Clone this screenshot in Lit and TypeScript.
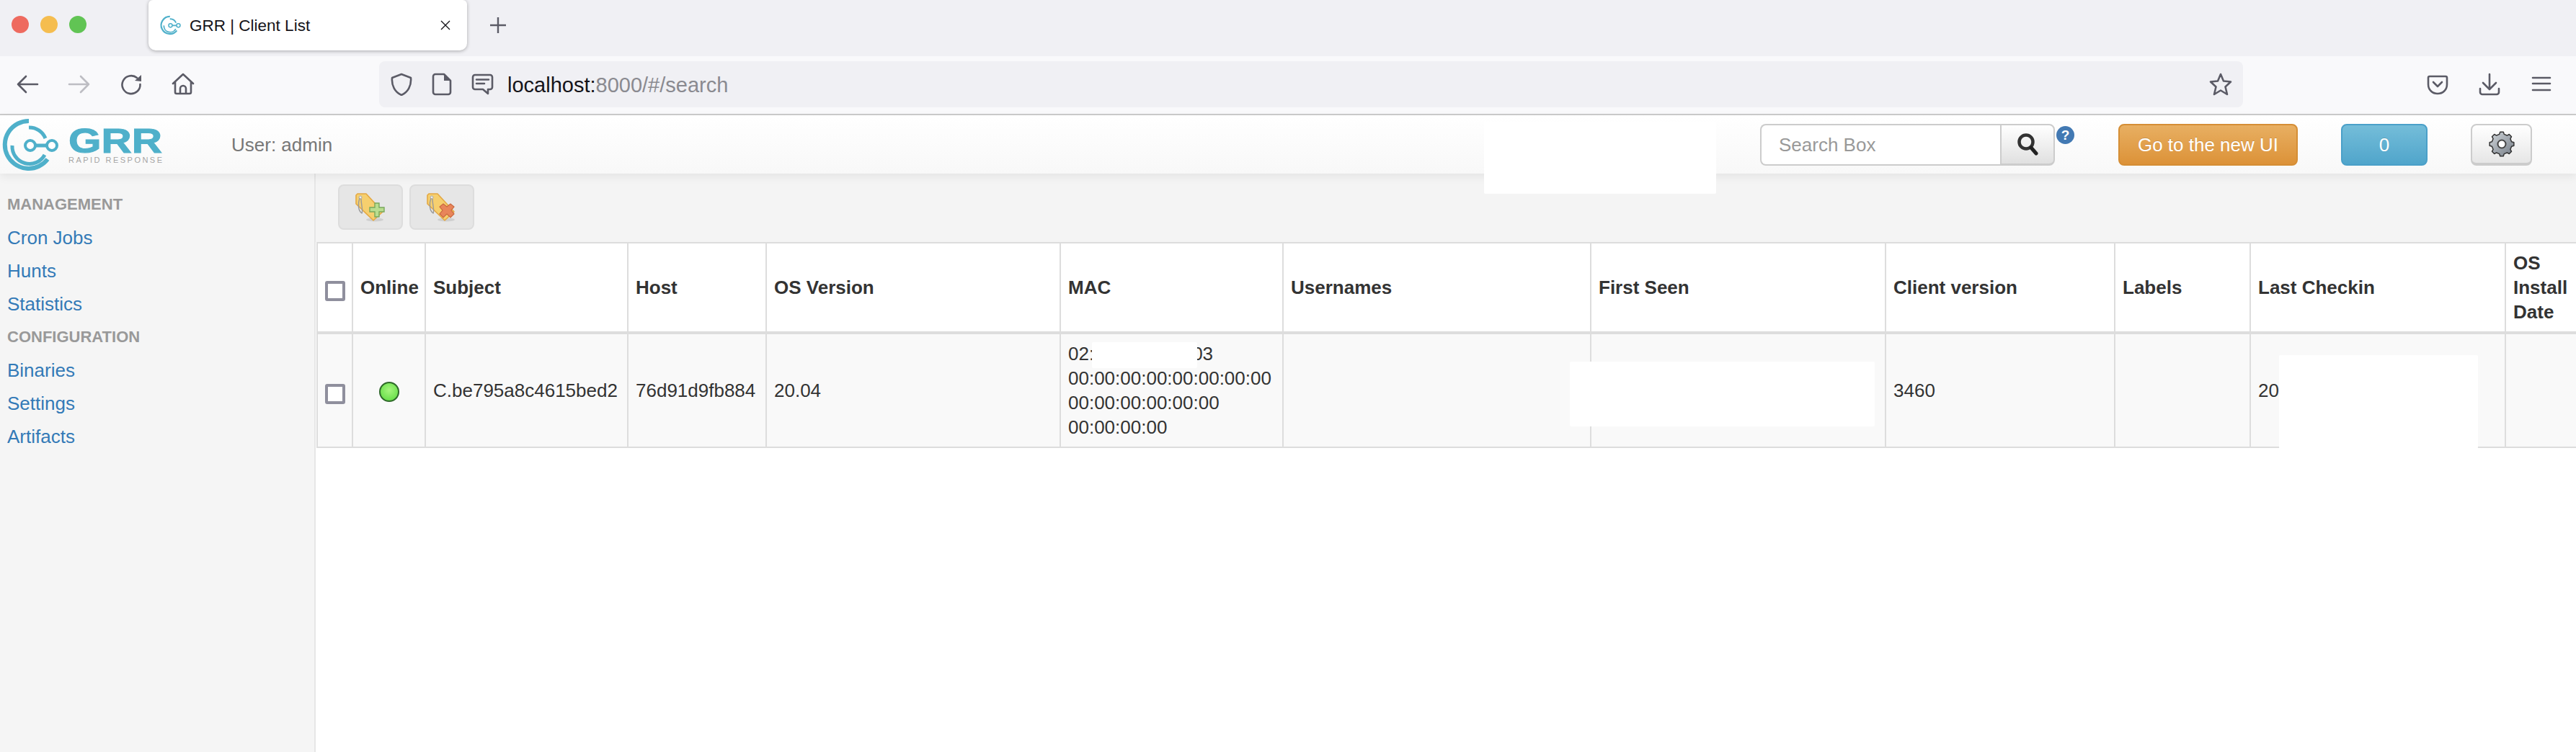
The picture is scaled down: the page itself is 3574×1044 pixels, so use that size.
import { LitElement, html, css, svg } from 'lit';
import { customElement } from 'lit/decorators.js';

const navGroups = [
  { title: 'MANAGEMENT', links: ['Cron Jobs', 'Hunts', 'Statistics'] },
  { title: 'CONFIGURATION', links: ['Binaries', 'Settings', 'Artifacts'] },
];

const columns = [
  { title: 'Online', width: 101 },
  { title: 'Subject', width: 281 },
  { title: 'Host', width: 192 },
  { title: 'OS Version', width: 408 },
  { title: 'MAC', width: 309 },
  { title: 'Usernames', width: 427 },
  { title: 'First Seen', width: 409 },
  { title: 'Client version', width: 318 },
  { title: 'Labels', width: 188 },
  { title: 'Last Checkin', width: 354 },
  { title: 'OS Install Date', width: 99 },
];

// grr ring mark, coordinates taken from the 81px tall navbar logo
const ringMark = svg`
  <g fill="none" stroke="#4fb0ca">
    <path stroke-width="6" d="M40 8A33 33 0 1 0 66 61" />
    <path stroke-width="5" d="M40 17A24 24 0 0 1 63 32" />
    <path stroke-width="5" d="M17 42A24 24 0 0 0 62 55" />
    <path stroke-width="5" d="M49 42H65" />
    <circle cx="42" cy="42" r="7" stroke-width="4" fill="#fff" />
    <circle cx="72" cy="42" r="7" stroke-width="4" fill="#fff" />
  </g>
`;

function gearPoints(cx: number, cy: number, teeth: number, outer: number, inner: number) {
  const pts: string[] = [];
  const step = (Math.PI * 2) / teeth;
  for (let i = 0; i < teeth; i++) {
    const a = i * step;
    [
      [a - step * 0.3, inner],
      [a - step * 0.17, outer],
      [a + step * 0.17, outer],
      [a + step * 0.3, inner],
    ].forEach(([t, r]) => {
      pts.push(`${(cx + Math.cos(t) * r).toFixed(2)},${(cy + Math.sin(t) * r).toFixed(2)}`);
    });
  }
  return pts.join(' ');
}

function tagIcon(badge: 'add' | 'remove') {
  return html`
    <svg class="tag" viewBox="0 0 42 40">
      <ellipse cx="27" cy="37" rx="12" ry="2.5" fill="#cfcfcf" />
      <path d="M3 1H15L38 26 25 38 1 15V3Z" fill="#f6cf6e" stroke="#e4a844" stroke-width="1.6" stroke-linejoin="round" />
      <circle cx="7" cy="6" r="2" fill="#eee" stroke="#aaa" />
      <path d="M6 7C3 15 4 25 9 28 11 25 8 15 8 8" fill="none" stroke="#9a9a9a" stroke-width="1.4" />
      ${badge === 'add'
        ? svg`<path d="M27 14h6v6h7v6h-7v7h-6v-7h-7v-6h7Z" fill="#b9dd8f" stroke="#78a85c" stroke-width="1.4" />`
        : svg`<path d="M23 15l5 4 5-4 5 4-4 5 4 5-5 5-5-5-5 5-5-5 4-5-4-5Z" fill="#e8855a" stroke="#c9683f" stroke-width="1.2" />`}
    </svg>
  `;
}

@customElement('app-root')
export class AppRoot extends LitElement {
  static styles = css`
    :host {
      display: flex;
      flex-direction: column;
      position: relative;
      width: 100%;
      height: 100vh;
      overflow: hidden;
      background: #fff;
      font-family: 'Liberation Sans', Arial, sans-serif;
      font-size: 26px;
      color: #333;
    }

    .tabstrip {
      display: flex;
      align-items: flex-start;
      height: 78px;
      padding-left: 16px;
      background: #f0f0f4;
      flex: none;
    }
    .lights {
      display: flex;
      gap: 16px;
      margin-top: 22px;
    }
    .light {
      width: 24px;
      height: 24px;
      border-radius: 50%;
    }
    .light.red { background: #ee6a5f; }
    .light.amber { background: #f5bd4f; }
    .light.green { background: #61c454; }
    .tab {
      display: flex;
      align-items: center;
      box-sizing: border-box;
      width: 442px;
      height: 70px;
      margin-left: 86px;
      padding: 0 22px 0 14px;
      background: #fff;
      border-radius: 6px 6px 10px 10px;
      box-shadow: 0 1px 5px rgba(0, 0, 0, 0.3);
      font-size: 22.5px;
      color: #15141a;
    }
    .favicon {
      width: 33px;
      height: 30px;
      margin-right: 10px;
    }
    .tab-title {
      flex: 1;
      padding-top: 2px;
    }
    .tab-close {
      width: 16px;
      height: 16px;
      stroke: #15141a;
      stroke-width: 1.4;
    }
    .newtab {
      width: 24px;
      height: 24px;
      margin: 23px 0 0 31px;
      stroke: #5b5b66;
      stroke-width: 2.4;
    }

    .toolbar {
      display: flex;
      align-items: center;
      gap: 40px;
      box-sizing: border-box;
      height: 82px;
      padding: 0 32px 2px 22px;
      background: #f9f9fb;
      border-bottom: 2px solid #ccc;
      flex: none;
    }
    .tb-icon {
      width: 32px;
      height: 32px;
      flex: none;
      fill: none;
      stroke: #5b5b66;
      stroke-width: 2.6;
      stroke-linecap: round;
      stroke-linejoin: round;
    }
    .tb-icon .solid {
      fill: #5b5b66;
      stroke: none;
    }
    .tb-icon.disabled { stroke: #bdbdc3; }
    .urlbar {
      display: flex;
      align-items: center;
      gap: 24px;
      box-sizing: border-box;
      width: 2586px;
      height: 64px;
      margin-left: 216px;
      padding: 0 15px;
      background: #f0f0f4;
      border-radius: 8px;
    }
    .url {
      flex: 1;
      margin-left: -5px;
      padding-top: 2px;
      font-size: 29px;
      color: #8a8a90;
    }
    .url b {
      font-weight: normal;
      color: #15141a;
    }
    .toolbar-right {
      display: flex;
      gap: 40px;
      margin-left: auto;
    }

    .navbar {
      position: relative;
      z-index: 1;
      display: flex;
      align-items: center;
      box-sizing: border-box;
      height: 81px;
      padding-right: 61px;
      background: linear-gradient(#fff, #f8f8f8);
      box-shadow: 0 4px 12px rgba(0, 0, 0, 0.07);
      flex: none;
    }
    .logo {
      width: 230px;
      height: 81px;
      flex: none;
    }
    .logo-grr {
      font: bold 48px 'Liberation Sans', Arial, sans-serif;
      fill: #4fb0ca;
      stroke: #4fb0ca;
      stroke-width: 1;
    }
    .logo-sub {
      font: 11px 'Liberation Sans', Arial, sans-serif;
      fill: #a6a6a6;
    }
    .user {
      margin-left: 91px;
      padding-top: 1px;
      color: #777;
    }
    .search {
      display: flex;
      height: 58px;
      margin-left: auto;
    }
    .search input {
      box-sizing: border-box;
      width: 333px;
      height: 58px;
      padding: 1px 22px 0 24px;
      border: 2px solid #ccc;
      border-right: 0;
      border-radius: 8px 0 0 8px;
      background: #fff;
      outline: none;
      font: 26px 'Liberation Sans', Arial, sans-serif;
    }
    .search input::placeholder { color: #999; }
    .search button {
      display: flex;
      align-items: center;
      justify-content: center;
      box-sizing: border-box;
      width: 76px;
      height: 58px;
      padding: 0;
      border: 2px solid #ccc;
      border-bottom-width: 3px;
      border-radius: 0 8px 8px 0;
      background: linear-gradient(#fff, #e0e0e0);
    }
    .search svg { width: 30px; height: 32px; }
    .help {
      display: flex;
      align-items: center;
      justify-content: center;
      align-self: flex-start;
      width: 25px;
      height: 25px;
      margin: 15px 0 0 2px;
      border-radius: 50%;
      background: #4279b3;
      color: #fff;
      font-size: 19px;
      font-weight: bold;
    }
    .btn {
      display: flex;
      align-items: center;
      justify-content: center;
      box-sizing: border-box;
      height: 58px;
      padding-top: 1px;
      border-radius: 8px;
      border: 2px solid;
      color: #fff;
      font-size: 26px;
      text-shadow: 0 -1px 0 rgba(0, 0, 0, 0.15);
    }
    .btn.warning {
      width: 249px;
      margin-left: 61px;
      border-color: #d58e35;
      background: linear-gradient(#e8af62, #dc9238);
    }
    .btn.info {
      width: 120px;
      margin-left: 60px;
      border-color: #4aa0c9;
      background: linear-gradient(#74bdd9, #50a5cb);
    }
    .btn.plain {
      width: 85px;
      margin-left: 60px;
      border-color: #ccc;
      border-bottom-width: 4px;
      background: linear-gradient(#fff, #e6e6e6);
    }
    .gear { width: 38px; height: 38px; }

    .body {
      display: flex;
      flex: 1;
      min-height: 0;
    }
    .sidebar {
      box-sizing: border-box;
      width: 438px;
      padding: 20px 0 0 10px;
      background: #f5f5f5;
      border-right: 2px solid #e6e6e6;
      flex: none;
    }
    .side-title,
    .side-link {
      height: 46px;
      line-height: 46px;
    }
    .side-title {
      font-size: 22px;
      font-weight: bold;
      color: #999;
    }
    .side-link {
      display: block;
      color: #337ab7;
      text-decoration: none;
    }

    .main {
      flex: 1;
      min-width: 0;
    }
    .actions {
      display: flex;
      gap: 9px;
      box-sizing: border-box;
      height: 95px;
      padding: 15px 0 0 31px;
      background: #f4f4f4;
    }
    .action {
      display: flex;
      align-items: center;
      justify-content: center;
      box-sizing: border-box;
      width: 90px;
      height: 63px;
      padding: 0;
      border: 2px solid #ddd;
      border-radius: 8px;
      background: #e6e6e6;
    }
    .tag { width: 42px; height: 40px; }

    table {
      width: 3135px;
      margin-left: 1px;
      table-layout: fixed;
      border-collapse: collapse;
      line-height: 34px;
    }
    th,
    td {
      box-sizing: border-box;
      padding: 10px;
      border: 2px solid #ddd;
      text-align: left;
      vertical-align: middle;
      overflow: hidden;
    }
    th { background: #fff; }
    thead th { border-bottom-width: 4px; }
    td { background: #f9f9f9; }
    .check-col { width: 49px; }
    .check {
      appearance: none;
      display: block;
      box-sizing: border-box;
      width: 28px;
      height: 28px;
      margin: 10px auto 0;
      border: 4px solid #8f8f9d;
      border-radius: 3px;
      background: #fff;
    }
    th.check-cell,
    td.check-cell { padding: 0; }
    td.status { text-align: center; }
    .dot {
      display: inline-block;
      box-sizing: border-box;
      width: 28px;
      height: 28px;
      border-radius: 50%;
      border: 2px solid #2f6a2a;
      background: radial-gradient(circle at 50% 40%, #a6f57e, #58d93c);
      vertical-align: middle;
    }
    .mac-gap {
      display: inline-block;
      width: 136px;
    }

    .redact {
      position: absolute;
      z-index: 2;
      background: #fff;
      border-radius: 2px;
    }
    .redact.top { left: 2059px; top: 169px; width: 322px; height: 100px; }
    .redact.mac { left: 1515px; top: 475px; width: 146px; height: 36px; }
    .redact.seen { left: 2178px; top: 502px; width: 423px; height: 90px; }
    .redact.checkin { left: 3162px; top: 493px; width: 276px; height: 130px; }
  `;

  private _renderTabStrip() {
    return html`
      <div class="tabstrip">
        <div class="lights">
          <span class="light red"></span>
          <span class="light amber"></span>
          <span class="light green"></span>
        </div>
        <div class="tab">
          <svg class="favicon" viewBox="0 0 84 82">${ringMark}</svg>
          <span class="tab-title">GRR | Client List</span>
          <svg class="tab-close" viewBox="0 0 16 16"><path d="M2 2l12 12M14 2L2 14" /></svg>
        </div>
        <svg class="newtab" viewBox="0 0 24 24"><path d="M12 1v22M1 12h22" /></svg>
      </div>
    `;
  }

  private _renderToolbar() {
    return html`
      <div class="toolbar">
        <svg class="tb-icon" viewBox="0 0 32 32"><path d="M30 16H3M14 5L3 16l11 11" /></svg>
        <svg class="tb-icon disabled" viewBox="0 0 32 32"><path d="M2 16h27M18 5l11 11-11 11" /></svg>
        <svg class="tb-icon" viewBox="0 0 32 32">
          <path d="M24 7A12.5 12.5 0 1 0 28.5 16" />
          <path class="solid" d="M21 11L30 3V12Z" />
        </svg>
        <svg class="tb-icon" viewBox="0 0 32 32">
          <path d="M2 15L16 2l14 13M5 13v14a2 2 0 0 0 2 2H25a2 2 0 0 0 2-2V13M12 29V22a4 4 0 0 1 8 0v7" />
        </svg>
        <div class="urlbar">
          <svg class="tb-icon" viewBox="0 0 32 32">
            <path d="M16 2L29 7C30 18 25 27 16 31 7 27 2 18 3 7Z" />
          </svg>
          <svg class="tb-icon" viewBox="0 0 32 32">
            <path d="M7 2H19L28 11V27a3 3 0 0 1-3 3H7a3 3 0 0 1-3-3V5a3 3 0 0 1 3-3Z" />
            <path class="solid" d="M19 2L28 11H19Z" />
          </svg>
          <svg class="tb-icon" viewBox="0 0 32 32">
            <path d="M6 3H27a3 3 0 0 1 3 3V20a3 3 0 0 1-3 3H24V29L17 23H6a3 3 0 0 1-3-3V6a3 3 0 0 1 3-3ZM8 9.5H25M8 15H19" />
          </svg>
          <span class="url"><b>localhost:</b>8000/#/search</span>
          <svg class="tb-icon" viewBox="0 0 32 32">
            <path d="M16 2L20 11.5 30 12.5 22.5 19.5 25 30 16 24.5 7 30 9.5 19.5 2 12.5 12 11.5Z" />
          </svg>
        </div>
        <div class="toolbar-right">
          <svg class="tb-icon" viewBox="0 0 32 32">
            <path d="M5 5H27a2 2 0 0 1 2 2V16C29 24 23 29 16 29S3 24 3 16V7a2 2 0 0 1 2-2ZM10 13l6 6 6-6" />
          </svg>
          <svg class="tb-icon" viewBox="0 0 32 32">
            <path d="M16 2V22M7 14l9 9 9-9M3 22v5a3 3 0 0 0 3 3H26a3 3 0 0 0 3-3v-5" />
          </svg>
          <svg class="tb-icon" viewBox="0 0 32 32"><path d="M4 7H28M4 15H28M4 24H28" /></svg>
        </div>
      </div>
    `;
  }

  private _renderNavbar() {
    return html`
      <div class="navbar">
        <svg class="logo" viewBox="0 0 230 81">
          ${ringMark}
          <text class="logo-grr" x="95" y="52" textLength="130" lengthAdjust="spacingAndGlyphs">GRR</text>
          <text class="logo-sub" x="95" y="66" textLength="130">RAPID RESPONSE</text>
        </svg>
        <span class="user">User: admin</span>
        <div class="search">
          <input placeholder="Search Box" />
          <button>
            <svg viewBox="0 0 30 32">
              <circle cx="13" cy="13" r="9.5" fill="none" stroke="#333" stroke-width="4.5" />
              <path d="M20 21l7 8" stroke="#222" stroke-width="5" stroke-linecap="round" />
            </svg>
          </button>
        </div>
        <span class="help">?</span>
        <div class="btn warning">Go to the new UI</div>
        <div class="btn info">0</div>
        <div class="btn plain">
          <svg class="gear" viewBox="0 0 38 38">
            <defs>
              <linearGradient id="gearFill" x1="0" y1="0" x2="1" y2="1">
                <stop offset="0" stop-color="#d3d8dc" />
                <stop offset="1" stop-color="#737b85" />
              </linearGradient>
            </defs>
            <polygon points=${gearPoints(19, 19, 8, 17, 14)} fill="url(#gearFill)" stroke="#333" stroke-width="1.5" stroke-linejoin="round" />
            <circle cx="19" cy="19" r="5.5" fill="#fff" stroke="#444" stroke-width="2" />
          </svg>
        </div>
      </div>
    `;
  }

  private _renderSidebar() {
    return html`
      <nav class="sidebar">
        ${navGroups.map(
          (group) => html`
            <div class="side-title">${group.title}</div>
            ${group.links.map((link) => html`<a class="side-link" href="#">${link}</a>`)}
          `
        )}
      </nav>
    `;
  }

  private _renderTable() {
    return html`
      <table>
        <colgroup>
          <col class="check-col" />
          ${columns.map((c) => html`<col style="width: ${c.width}px" />`)}
        </colgroup>
        <thead>
          <tr>
            <th class="check-cell"><input class="check" type="checkbox" /></th>
            ${columns.map((c) => html`<th>${c.title}</th>`)}
          </tr>
        </thead>
        <tbody>
          <tr>
            <td class="check-cell"><input class="check" type="checkbox" /></td>
            <td class="status"><span class="dot"></span></td>
            <td>C.be795a8c4615bed2</td>
            <td>76d91d9fb884</td>
            <td>20.04</td>
            <td>
              02:<span class="mac-gap"></span>03<br />
              00:00:00:00:00:00:00:00<br />
              00:00:00:00:00:00<br />
              00:00:00:00
            </td>
            <td></td>
            <td></td>
            <td>3460</td>
            <td></td>
            <td>20</td>
            <td></td>
          </tr>
        </tbody>
      </table>
    `;
  }

  render() {
    return html`
      ${this._renderTabStrip()} ${this._renderToolbar()} ${this._renderNavbar()}
      <div class="body">
        ${this._renderSidebar()}
        <div class="main">
          <div class="actions">
            <button class="action">${tagIcon('add')}</button>
            <button class="action">${tagIcon('remove')}</button>
          </div>
          ${this._renderTable()}
        </div>
      </div>
      <div class="redact top"></div>
      <div class="redact mac"></div>
      <div class="redact seen"></div>
      <div class="redact checkin"></div>
    `;
  }
}

declare global {
  interface HTMLElementTagNameMap {
    'app-root': AppRoot;
  }
}
